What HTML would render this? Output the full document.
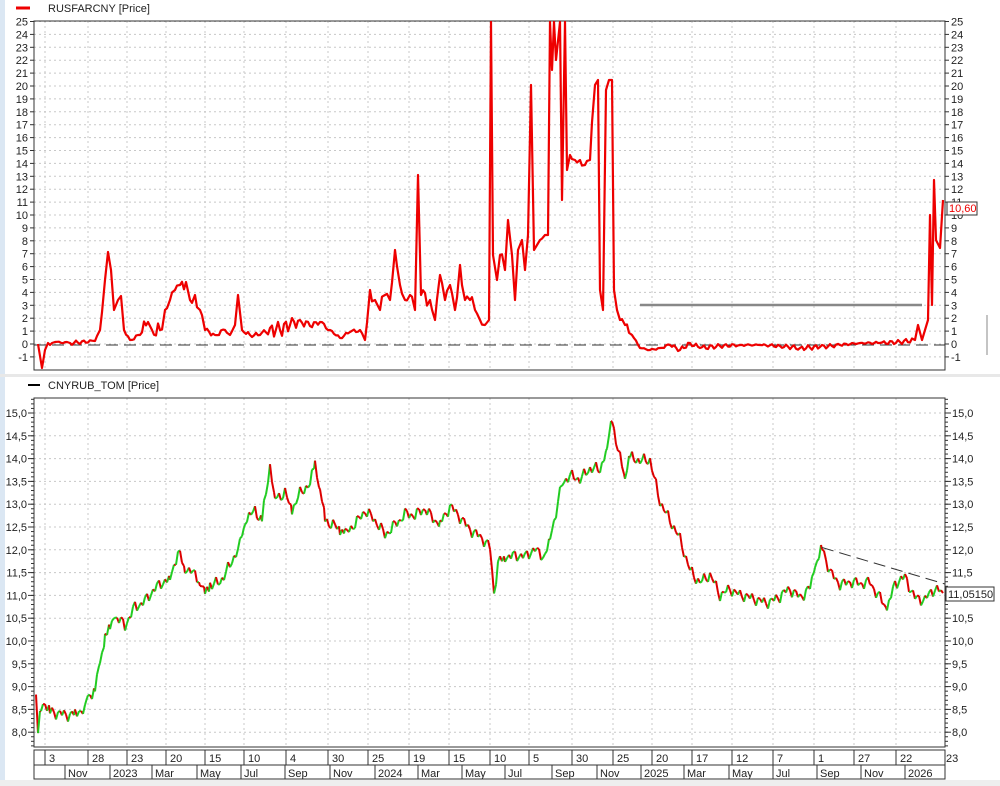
<!DOCTYPE html>
<html><head><meta charset="utf-8"><style>
html,body{margin:0;padding:0;background:#fff;width:1000px;height:786px;overflow:hidden}
svg text{font-family:"Liberation Sans",sans-serif;font-size:11px;fill:#222}
</style></head><body>
<svg id="s" width="1000" height="786" xmlns="http://www.w3.org/2000/svg">
<rect x="0" y="0" width="1000" height="786" fill="#fff"/>
<rect x="0" y="0" width="5" height="786" fill="#dbe7f3"/>
<rect x="0" y="780" width="1000" height="6" fill="#eeeeee"/>
<rect x="0" y="374" width="1000" height="3" fill="#e8e8e8"/>
<line x1="987" y1="315" x2="987" y2="355" stroke="#888" stroke-width="1"/>
<line x1="16" y1="8" x2="30" y2="8" stroke="#e00" stroke-width="3"/>
<text x="48" y="12">RUSFARCNY [Price]</text>
<line x1="28" y1="385" x2="40" y2="385" stroke="#000" stroke-width="2"/>
<text x="48" y="389">CNYRUB_TOM [Price]</text>
<g id="g"></g>
</svg>
<script>
var g=document.getElementById('g'),h='';
var L=34,R=945;
var vx=[45,88,127,166,205,244,286,328,368,409,449,490,529,572,613,652,692,732,773,814,854,896];
var vl=['3','28','23','20','15','10','4','30','25','19','15','10','5','30','25','20','17','12','7','1','27','22'];
function grid(top,bot,ys){vx.forEach(function(x){h+='<line x1="'+x+'" y1="'+top+'" x2="'+x+'" y2="'+bot+'" stroke="#c8c8c8" stroke-dasharray="2,3"/>'});ys.forEach(function(y){h+='<line x1="'+L+'" y1="'+y+'" x2="'+R+'" y2="'+y+'" stroke="#c8c8c8" stroke-dasharray="2,3"/>'});}
var ty=[];for(var v=-1;v<=25;v++)ty.push(344-v*12.9);
grid(21,370,ty);
h+='<rect x="'+L+'" y="21" width="'+(R-L)+'" height="349" fill="none" stroke="#333"/>';
for(var v=-1;v<=25;v++){var y=344-v*12.9;h+='<line x1="30" y1="'+y+'" x2="'+L+'" y2="'+y+'" stroke="#333"/><line x1="'+R+'" y1="'+y+'" x2="'+(R+4)+'" y2="'+y+'" stroke="#333"/>';
h+='<text x="28" y="'+(y+4)+'" text-anchor="end">'+v+'</text><text x="951" y="'+(y+4)+'">'+v+'</text>';}
h+='<line x1="34" y1="345" x2="945" y2="345" stroke="#333" stroke-dasharray="12,6"/>';
h+='<line x1="640" y1="305" x2="922" y2="305" stroke="#888" stroke-width="2.5"/>';
var tp="38,344 42,368 45,350 48,343 55,342 70,343 95,341 100,330 105,280 108,252 111,270 114,310 118,300 121,296 124,330 130,340 140,335 148,322 152,330 160,330 165,310 170,300 175,290 180,285 186,282 190,300 195,295 200,310 205,330 215,335 225,330 230,335 235,325 238,295 242,330 250,335 260,335 270,328 280,330 290,325 300,320 310,326 320,322 330,330 340,338 350,332 360,330 365,340 370,290 375,300 380,310 385,295 390,300 395,250 400,285 405,300 410,295 415,310 418,175 421,295 430,300 435,320 440,275 445,300 450,285 455,310 460,265 465,300 470,300 475,310 480,320 485,325 489,320 491,22 493,255 497,280 500,255 505,270 508,220 512,255 515,300 518,250 522,240 525,270 528,235 531,85 534,250 537,245 540,240 545,235 548,235 550,22 552,70 554,22 556,60 560,22 562,200 565,22 567,170 570,155 575,160 580,160 585,165 590,160 595,85 598,80 600,290 603,310 606,90 609,80 612,80 614,290 617,310 620,320 625,325 632,335 640,348 650,350 660,348 670,345 680,350 690,343 700,348 720,346 740,345 760,345 780,346 800,348 820,347 840,345 860,343 880,343 900,342 915,340 918,325 922,340 925,330 928,320 930,215 932,305 934,180 936,240 940,248 943,200";
var ta=tp.split(' ').map(function(s){var q=s.split(',');return [+q[0],+q[1]]});
var tq=[];
for(var i=0;i<ta.length-1;i++){var a=ta[i],b=ta[i+1];tq.push(a);var d=b[0]-a[0];if(d>4){for(var x=a[0]+2;x<b[0]-1;x+=2){var t=(x-a[0])/d;var y=a[1]+(b[1]-a[1])*t;var amp=(y>330)?1.5:5;y+=Math.sin(x*2.3)*amp+Math.sin(x*0.9)*amp*0.6;tq.push([x,Math.min(y,366)]);}}}
tq.push(ta[ta.length-1]);
h+='<polyline points="'+tq.map(function(p){return p[0]+','+p[1].toFixed(1)}).join(' ')+'" fill="none" stroke="#e00" stroke-width="2.2" stroke-linejoin="round"/>';
h+='<rect x="947" y="202" width="30" height="13" fill="#fff" stroke="#333"/><text x="949" y="212" style="fill:#e00">10,60</text>';
function py(p){return 413+(15-p)*45.6}
var by=[];for(var p=8;p<=15.01;p+=0.5)by.push(py(p));
grid(398,747,by);
h+='<rect x="'+L+'" y="398" width="'+(R-L)+'" height="349" fill="none" stroke="#333"/>';
for(var p=7.7;p<=15.3;p+=0.1){var y=py(p);h+='<line x1="31" y1="'+y+'" x2="'+L+'" y2="'+y+'" stroke="#333"/><line x1="'+R+'" y1="'+y+'" x2="'+(R+3)+'" y2="'+y+'" stroke="#333"/>';}
for(var p=8;p<=15.01;p+=0.5){var y=py(p),s=p.toFixed(1).replace('.',',');h+='<line x1="28" y1="'+y+'" x2="'+L+'" y2="'+y+'" stroke="#333"/><line x1="'+R+'" y1="'+y+'" x2="'+(R+6)+'" y2="'+y+'" stroke="#333"/><text x="27" y="'+(y+4)+'" text-anchor="end">'+s+'</text><text x="952" y="'+(y+4)+'">'+s+'</text>';}
var bp=[[36,8.8],[38,8.0],[41,8.5],[45,8.6],[50,8.4],[60,8.45],[75,8.4],[85,8.45],[88,8.7],[95,9.0],[100,9.5],[105,10.2],[110,10.3],[115,10.5],[125,10.3],[135,10.8],[145,10.9],[155,11.1],[165,11.3],[170,11.4],[178,12.0],[185,11.6],[195,11.4],[200,11.3],[205,11.0],[210,11.3],[220,11.3],[230,11.6],[240,12.1],[245,12.7],[255,12.9],[262,12.6],[270,13.8],[275,13.1],[285,13.3],[292,12.9],[300,13.2],[310,13.4],[315,13.9],[320,13.4],[325,12.7],[340,12.4],[345,12.3],[355,12.6],[365,12.9],[375,12.6],[385,12.3],[395,12.6],[405,12.8],[415,12.7],[425,12.9],[440,12.6],[450,12.9],[460,12.7],[470,12.5],[480,12.3],[490,12.0],[494,11.0],[498,11.7],[505,11.9],[515,11.9],[525,11.8],[535,12.0],[545,11.9],[550,12.3],[556,12.8],[562,13.4],[570,13.6],[580,13.6],[590,13.8],[600,13.7],[607,14.2],[612,14.9],[618,14.2],[625,13.7],[630,14.0],[640,13.9],[650,14.0],[660,13.1],[670,12.6],[680,12.2],[690,11.6],[700,11.3],[710,11.4],[720,11.0],[730,11.2],[740,11.0],[750,10.9],[760,10.9],[770,10.9],[780,10.95],[790,11.1],[800,11.0],[810,11.2],[815,11.6],[822,12.0],[830,11.5],[840,11.3],[850,11.3],[860,11.2],[870,11.3],[880,11.0],[887,10.7],[895,11.2],[905,11.4],[915,11.0],[925,10.9],[935,11.1],[943,11.05]];
var pts=[];for(var i=0;i<bp.length-1;i++){var a=bp[i],b=bp[i+1];for(var x=a[0];x<b[0];x+=2){var t=(x-a[0])/(b[0]-a[0]);var v=a[1]+(b[1]-a[1])*t+(Math.sin(x*2.1)*0.09+Math.sin(x*0.53)*0.06+Math.sin(x*0.17)*0.05);pts.push([x,v]);}}
pts.push(bp[bp.length-1]);
for(var i=1;i<pts.length;i++){var a=pts[i-1],b=pts[i];var c=b[1]>=a[1]?'#2c2':'#d00';h+='<line x1="'+a[0]+'" y1="'+py(a[1]).toFixed(1)+'" x2="'+b[0]+'" y2="'+py(b[1]).toFixed(1)+'" stroke="'+c+'" stroke-width="2"/>';}
h+='<line x1="822" y1="'+py(12.05)+'" x2="945" y2="'+py(11.25)+'" stroke="#333" stroke-dasharray="12,6"/>';
h+='<rect x="946" y="587" width="48" height="14" fill="#fff" stroke="#333"/><text x="948" y="598">11,05150</text>';
h+='<rect x="34" y="750" width="911" height="29" fill="#fff" stroke="#333"/><line x1="34" y1="765" x2="945" y2="765" stroke="#333"/>';
vx.forEach(function(x,i){h+='<line x1="'+x+'" y1="750" x2="'+x+'" y2="765" stroke="#333"/><text x="'+(x+4)+'" y="762">'+vl[i]+'</text>';});
h+='<text x="946" y="762">23</text>';
var mx=[65,110,152,197,241,285,330,375,418,462,505,552,597,641,684,729,773,817,861,905];
var ml=['Nov','2023','Mar','May','Jul','Sep','Nov','2024','Mar','May','Jul','Sep','Nov','2025','Mar','May','Jul','Sep','Nov','2026'];
mx.forEach(function(x,i){h+='<line x1="'+x+'" y1="765" x2="'+x+'" y2="779" stroke="#333"/><text x="'+(x+3)+'" y="777">'+ml[i]+'</text>';});
g.innerHTML=h;
</script>
</body></html>
